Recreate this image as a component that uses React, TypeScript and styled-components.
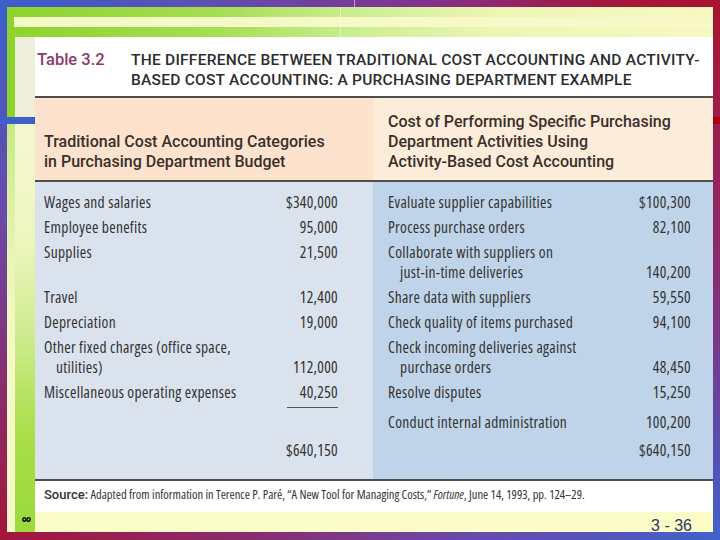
import React from "react";
import styled, { createGlobalStyle } from "styled-components";

const GlobalStyle = createGlobalStyle`
  html, body { margin: 0; padding: 0; }
  body { width: 720px; height: 540px; overflow: hidden; background: #ffffff; }
`;

const Slide = styled.div`
  position: relative;
  width: 720px;
  height: 540px;
  display: grid;
  grid-template-columns: 7px 1fr 7px;
  grid-template-rows: 7px 1fr 8px;
  overflow: hidden;
`;

const edgeBg: Record<string, string> = {
  top: "linear-gradient(to right, #3b5fcc 0%, #5f4fb0 30%, #84308a 60%, #a3173a 85%, #ac1230 100%)",
  bottom: "linear-gradient(to right, #a3163a 0%, #8a2c70 35%, #6a4aa8 65%, #4260cc 100%)",
  left: "linear-gradient(to bottom, #3b5fcc 0%, #6a4aa8 40%, #a3163a 100%)",
  right: "linear-gradient(to bottom, #a81430 0%, #8a2c70 50%, #4260cc 100%)",
};

const FrameEdge = styled.div<{ $side: "top" | "bottom" | "left" | "right" }>`
  grid-column: ${(p) => (p.$side === "left" ? "1" : p.$side === "right" ? "3" : "1 / -1")};
  grid-row: ${(p) => (p.$side === "top" ? "1" : p.$side === "bottom" ? "3" : "2")};
  background: ${(p) => edgeBg[p.$side]};
`;

const Accent = styled.div<{ $side: "left" | "right" }>`
  position: absolute;
  top: 117px;
  height: 7px;
  ${(p) => (p.$side === "left" ? "left: 0; width: 35px; background: #3c60cc;" : "right: 0; width: 7px; background: #b0000e;")}
`;

const HairLine = styled.div<{ $x: number; $top: number; $h: number }>`
  position: absolute;
  left: ${(p) => p.$x}px;
  top: ${(p) => p.$top}px;
  width: 1px;
  height: ${(p) => p.$h}px;
  background: rgba(255, 255, 240, 0.55);
`;

const Inner = styled.div`
  grid-column: 2;
  grid-row: 2;
  display: grid;
  grid-template-columns: 8px 20px 1fr;
  grid-template-rows: 30px 1fr 20px;
  min-height: 0;
`;

const TopBand = styled.div`
  grid-column: 1 / -1;
  grid-row: 1;
  padding: 10px 0 10px 7px;
  background: linear-gradient(to right, #8cd42c 0%, #a6de52 30%, #cdee94 50%, #eef6b4 70%, #f6f8c2 100%);
`;

const Stripe = styled.div`
  height: 10px;
  background: linear-gradient(to right, #f3f8c6 0%, #f8f9c8 100%);
`;

const OuterStrip = styled.div`
  grid-column: 1;
  grid-row: 2 / 4;
  background: linear-gradient(
    to bottom,
    #8cd42c 0px,
    #8cd42c 80px,
    #c6ea86 88px,
    #eaf6b8 230px,
    #f6f9c8 330px,
    #f8f9c8 100%
  );
`;

const InnerStrip = styled.div`
  grid-column: 2;
  grid-row: 2 / 4;
  display: flex;
  flex-direction: column;
  justify-content: flex-end;
  align-items: flex-start;
  padding: 0 0 9px 7px;
  background: linear-gradient(
    to bottom,
    #efeedd 0px,
    #efeedd 80px,
    #f4f8d0 88px,
    #eef6c0 200px,
    #cdeb8c 300px,
    #a8de48 400px,
    #9cda3c 100%
  );
`;

const Table = styled.div`
  grid-column: 3;
  grid-row: 2;
  display: grid;
  grid-template-columns: 338px 1fr;
  grid-template-rows: 61px 84px 1fr 32px;
  background: #ffffff;
  min-height: 0;
`;

const TitleRow = styled.div`
  grid-column: 1 / -1;
  display: flex;
  align-items: baseline;
  padding: 13px 0 0 2px;
  border-bottom: 2px solid #4e4e4e;
  box-sizing: border-box;
`;

const TableLabel = styled.div`
  flex: 0 0 94px;
  font-family: Roboto, "Liberation Sans", sans-serif;
  font-weight: 500;
  font-size: 16.5px;
  line-height: 20px;
  color: #8c3a68;
`;

const TableTitle = styled.div`
  font-family: Roboto, "Liberation Sans", sans-serif;
  font-weight: 500;
  font-size: 15.5px;
  letter-spacing: 0.25px;
  line-height: 20px;
  color: #2c2c2c;
`;

const HeaderCell = styled.div<{ $right?: boolean }>`
  display: flex;
  flex-direction: column;
  justify-content: flex-end;
  padding: 0 8px 8px ${(p) => (p.$right ? "15px" : "9px")};
  background: ${(p) => (p.$right ? "#feecda" : "#fde3cd")};
  border-bottom: 2px solid #4e4e4e;
  box-sizing: border-box;
  font-family: Roboto, "Liberation Sans", sans-serif;
  font-weight: 500;
  font-size: 16px;
  line-height: 20px;
  color: #3a2f2a;
`;

const Body = styled.div`
  grid-column: 1 / -1;
  display: grid;
  grid-template-columns: 338px 1fr;
  align-content: start;
  row-gap: 5px;
  padding: 10px 0 19px;
  background: linear-gradient(to right, #d9e2ed 0, #d9e2ed 338px, #bfd4e8 338px, #bfd4e8 100%);
  border-bottom: 2px solid #4e4e4e;
  box-sizing: border-box;
  font-family: "Open Sans", "Liberation Sans", sans-serif;
  font-stretch: 75%;
  font-size: 15.5px;
  letter-spacing: 0.3px;
  line-height: 20px;
  color: #333333;
`;

const Cell = styled.div<{ $right?: boolean; $push?: number }>`
  display: flex;
  justify-content: space-between;
  align-items: flex-end;
  align-self: start;
  margin-top: ${(p) => p.$push ?? 0}px;
  padding: 0 ${(p) => (p.$right ? "22px" : "35px")} 0 ${(p) => (p.$right ? "15px" : "9px")};
`;

const Label = styled.div`
  display: flex;
  flex-direction: column;
`;

const Cont = styled.span`
  padding-left: 12px;
`;

const Amount = styled.div`
  text-align: right;
`;

const SubRule = styled.div`
  margin-left: auto;
  width: 51px;
  height: 1px;
  background: #4e5660;
`;

const SourceRow = styled.div`
  grid-column: 1 / -1;
  padding: 6px 9px 0;
  font-family: "Open Sans", "Liberation Sans", sans-serif;
  font-stretch: 75%;
  font-size: 12.5px;
  line-height: 16px;
  color: #333333;
  white-space: nowrap;
`;

const SourceLead = styled.span`
  font-family: Roboto, "Liberation Sans", sans-serif;
  font-stretch: 100%;
  font-weight: 500;
  font-size: 13px;
`;

const BottomBand = styled.div`
  grid-column: 3;
  grid-row: 3;
  display: flex;
  justify-content: flex-end;
  padding: 6px 21px 0 0;
  background: #fcfcc8;
  overflow: hidden;
  font-family: "Liberation Sans", Arial, sans-serif;
  font-size: 16px;
  line-height: 16px;
  color: #2e3660;
`;

type Item = { lines: string[]; amount: string };

const rows: [Item, Item][] = [
  [{ lines: ["Wages and salaries"], amount: "$340,000" }, { lines: ["Evaluate supplier capabilities"], amount: "$100,300" }],
  [{ lines: ["Employee benefits"], amount: "95,000" }, { lines: ["Process purchase orders"], amount: "82,100" }],
  [{ lines: ["Supplies"], amount: "21,500" }, { lines: ["Collaborate with suppliers on", "just-in-time deliveries"], amount: "140,200" }],
  [{ lines: ["Travel"], amount: "12,400" }, { lines: ["Share data with suppliers"], amount: "59,550" }],
  [{ lines: ["Depreciation"], amount: "19,000" }, { lines: ["Check quality of items purchased"], amount: "94,100" }],
  [
    { lines: ["Other fixed charges (office space,", "utilities)"], amount: "112,000" },
    { lines: ["Check incoming deliveries against", "purchase orders"], amount: "48,450" },
  ],
  [{ lines: ["Miscellaneous operating expenses"], amount: "40,250" }, { lines: ["Resolve disputes"], amount: "15,250" }],
];

const EntryCell = ({ item, right }: { item: Item; right?: boolean }) => (
  <Cell $right={right}>
    <Label>
      {item.lines.map((l, i) => (i === 0 ? <span key={i}>{l}</span> : <Cont key={i}>{l}</Cont>))}
    </Label>
    <Amount>{item.amount}</Amount>
  </Cell>
);

const Fleuron = () => (
  <svg width="9" height="7" viewBox="0 0 9 7">
    <ellipse cx="2.4" cy="3.5" rx="2.3" ry="2.6" fill="#111" />
    <ellipse cx="6.6" cy="3.5" rx="2.3" ry="2.6" fill="#111" />
    <circle cx="2.4" cy="3.4" r="0.9" fill="#9cda3c" />
    <circle cx="6.6" cy="3.4" r="0.9" fill="#9cda3c" />
  </svg>
);

export default function App() {
  return (
    <>
      <GlobalStyle />
      <Slide>
        <FrameEdge $side="top" />
        <FrameEdge $side="left" />
        <Inner>
          <TopBand>
            <Stripe />
          </TopBand>
          <OuterStrip />
          <InnerStrip>
            <Fleuron />
          </InnerStrip>
          <Table>
            <TitleRow>
              <TableLabel>Table 3.2</TableLabel>
              <TableTitle>
                THE DIFFERENCE BETWEEN TRADITIONAL COST ACCOUNTING AND ACTIVITY-
                <br />
                BASED COST ACCOUNTING: A PURCHASING DEPARTMENT EXAMPLE
              </TableTitle>
            </TitleRow>
            <HeaderCell>
              <span>Traditional Cost Accounting Categories</span>
              <span>in Purchasing Department Budget</span>
            </HeaderCell>
            <HeaderCell $right>
              <span>Cost of Performing Specific Purchasing</span>
              <span>Department Activities Using</span>
              <span>Activity-Based Cost Accounting</span>
            </HeaderCell>
            <Body>
              {rows.map(([l, r], i) => (
                <React.Fragment key={i}>
                  <EntryCell item={l} />
                  <EntryCell item={r} right />
                </React.Fragment>
              ))}
              <Cell>
                <SubRule />
              </Cell>
              <Cell $right $push={5}>
                <Label>
                  <span>Conduct internal administration</span>
                </Label>
                <Amount>100,200</Amount>
              </Cell>
              <Cell $push={3}>
                <span />
                <Amount>$640,150</Amount>
              </Cell>
              <Cell $right $push={3}>
                <span />
                <Amount>$640,150</Amount>
              </Cell>
            </Body>
            <SourceRow>
              <SourceLead>Source:</SourceLead> Adapted from information in Terence P. Paré, “A New Tool for Managing
              Costs,” <i>Fortune</i>, June 14, 1993, pp. 124–29.
            </SourceRow>
          </Table>
          <BottomBand>3 - 36</BottomBand>
        </Inner>
        <FrameEdge $side="right" />
        <FrameEdge $side="bottom" />
        <Accent $side="left" />
        <Accent $side="right" />
        <HairLine $x={340} $top={7} $h={30} />
        <HairLine $x={354} $top={0} $h={7} />
      </Slide>
    </>
  );
}
